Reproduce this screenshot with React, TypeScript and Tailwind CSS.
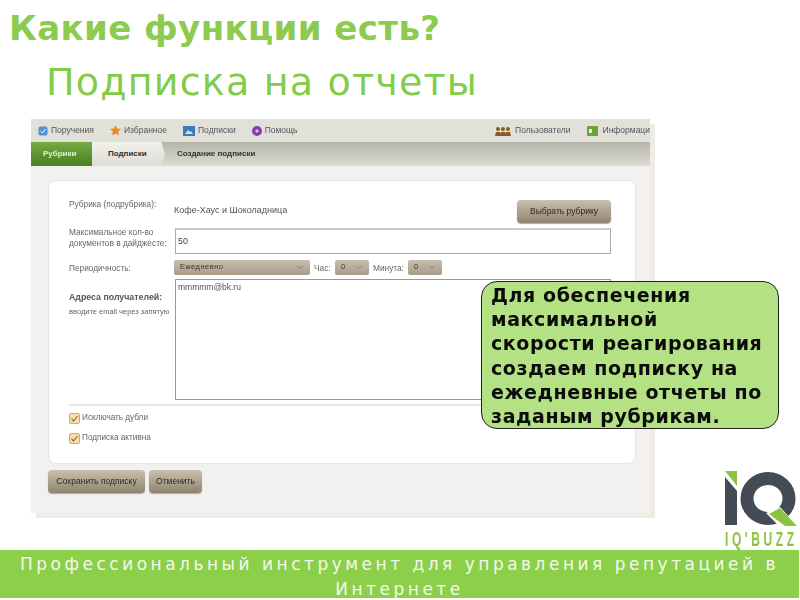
import React from "react";

const Btn = ({ children, className = "" }: { children: React.ReactNode; className?: string }) => (
  <div className={"flex items-center justify-center rounded-[4px] bg-gradient-to-b from-[#c9c0ae] to-[#8f8470] text-[#2e2a22] text-[8.5px] font-['Liberation_Sans',sans-serif] shadow-[0_1px_1px_#aaa] " + className}>
    {children}
  </div>
);

const Sel = ({ label, className = "" }: { label: string; className?: string }) => (
  <div className={"flex items-center justify-between h-[15px] rounded-[2px] bg-gradient-to-b from-[#c7beae] to-[#a89d89] px-[6px] text-[#3b3528] text-[7.5px] tracking-[0.5px] " + className}>
    <span>{label}</span>
    <svg width="8" height="5" viewBox="0 0 8 5"><path d="M1 1l3 2.5L7 1" fill="none" stroke="#8d8474" strokeWidth="1" /></svg>
  </div>
);

const Check = ({ label }: { label: string }) => (
  <div className="flex items-center gap-[2px] h-[12px]">
    <svg width="11" height="11" viewBox="0 0 11 11">
      <rect x="0.5" y="0.5" width="10" height="10" rx="1.5" fill="#f6dcae" stroke="#d9a860" />
      <path d="M2.5 5.5l2 2.5 4-5" fill="none" stroke="#9a6a28" strokeWidth="1.2" />
    </svg>
    <span className="text-[8.2px] text-[#666]">{label}</span>
  </div>
);

const Logo = () => (
  <div className="w-[80px] blur-[0.3px]">
    <svg width="80" height="64" viewBox="0 0 80 64" className="block">
      <path d="M5 6H17V21Z" fill="#8bc53f" />
      <path d="M5 12L17 26V60H5Z" fill="#434c54" />
      <ellipse cx="48" cy="33.5" rx="21" ry="20" fill="none" stroke="#434c54" strokeWidth="13" />
      <path d="M46 48L60 42L80 64H62Z" fill="#fff" />
      <path d="M49 49L60 43L77 61H65Z" fill="#8bc53f" />
    </svg>
    <div className="origin-left scale-x-[0.6] ml-[5px] font-['Liberation_Sans',sans-serif] font-bold text-[#8bc53f] text-[20px] leading-[20px] tracking-[6px] whitespace-nowrap">IQ'BUZZ</div>
  </div>
);

export default function App() {
  return (
    <div className="relative w-[800px] h-[600px] overflow-hidden bg-white font-['DejaVu_Sans',sans-serif]">
      <h1 className="pl-[9px] pt-[8px] h-[60px] text-[34px] leading-[40px] font-bold text-[#8ccb50] tracking-[0.4px] whitespace-nowrap">Какие функции есть?</h1>
      <h2 className="pl-[46px] h-[59px] text-[38px] leading-[44px] text-[#82cc4a] tracking-[1.2px] whitespace-nowrap">Подписка на отчеты</h2>

      <div className="ml-[31px] w-[619px] h-[394px] bg-[#f3f1ef] shadow-[5px_5px_0_#efece6] font-['Liberation_Sans',sans-serif] blur-[0.45px]">
        <div className="h-[23px] bg-[#e1e1d9] flex items-center justify-between pl-[7px] text-[8.5px] text-[#55555a]">
          <div className="flex items-center">
            <svg width="10" height="10" viewBox="0 0 10 10"><rect x="0.5" y="0.5" width="9" height="9" rx="2" fill="#4f94d4" /><path d="M2.5 5l2 2 3-4" stroke="#fff" fill="none" /></svg>
            <span className="ml-[3px]">Поручения</span>
            <svg className="ml-[16px]" width="11" height="11" viewBox="0 0 11 11"><path d="M5.5 0l1.6 3.6 3.9.4-2.9 2.6.8 3.9-3.4-2-3.4 2 .8-3.9L0 4l3.9-.4z" fill="#e88a1f" /></svg>
            <span className="ml-[3px]">Избранное</span>
            <svg className="ml-[16px]" width="12" height="10" viewBox="0 0 12 10"><rect width="12" height="10" fill="#3f79b8" /><path d="M2 8l3-4 2 2 1-1 2 3z" fill="#cfe4f7" /></svg>
            <span className="ml-[3px]">Подписки</span>
            <svg className="ml-[16px]" width="10" height="10" viewBox="0 0 10 10"><circle cx="5" cy="5" r="5" fill="#8a3fb0" /><circle cx="5" cy="5" r="1.6" fill="#e8c8f4" /></svg>
            <span className="ml-[3px]">Помощь</span>
          </div>
          <div className="flex items-center whitespace-nowrap">
            <svg width="16" height="10" viewBox="0 0 16 10"><g fill="#8a5a22"><circle cx="3" cy="3" r="2" /><circle cx="8" cy="3" r="2" /><circle cx="13" cy="3" r="2" /><path d="M0 10l1-4h4l1 4zM5 10l1-4h4l1 4zM10 10l1-4h4l1 4z" /></g></svg>
            <span className="ml-[4px] mr-[16px]">Пользователи</span>
            <svg width="11" height="10" viewBox="0 0 11 10"><rect width="11" height="10" fill="#6aa53a" /><rect x="2" y="3" width="3" height="4" fill="#e8f4d8" /></svg>
            <span className="ml-[5px]">Информаци</span>
          </div>
        </div>

        <div className="h-[24px] flex items-stretch bg-gradient-to-b from-[#b5b5a9] to-[#dcdcd4] text-[8px] font-bold">
          <div className="w-[61px] bg-gradient-to-b from-[#74ab42] to-[#4b7f24] text-[#e4f2d2] flex items-center pl-[12px]">Рубрики</div>
          <div className="w-[73px] bg-gradient-to-b from-[#f2f1ec] to-[#dedcd5] text-[#333] flex items-center pl-[16px] [clip-path:polygon(0_0,95%_0,100%_50%,95%_100%,0_100%)]">Подписки</div>
          <div className="flex items-center pl-[12px] text-[#333]">Создание подписки</div>
        </div>

        <div className="pl-[17px] pt-[14px]">
          <div className="w-[588px] h-[284px] bg-white rounded-[8px] border border-[#e6e6e6] pl-[20px] pt-[15px] text-[8.3px] text-[#666]">
            <div className="flex items-center h-[30px]">
              <span className="w-[105px] mb-[14px]">Рубрика (подрубрика):</span>
              <span className="text-[#555] text-[9px] flex-1">Кофе-Хаус и Шоколадница</span>
              <Btn className="w-[94px] h-[23px] mr-[24px]">Выбрать рубрику</Btn>
            </div>
            <div className="flex items-center h-[26px] mt-[2px]">
              <span className="w-[106px] leading-[11px] mb-[6px]">Максимальное кол-во документов в дайджесте:</span>
              <div className="w-[436px] h-[26px] border border-[#aaa] border-t-[2px] border-t-[#ccc] flex items-center pl-[2px] text-[9px] text-[#444]">50</div>
            </div>
            <div className="flex items-center h-[16px] mt-[5px]">
              <span className="w-[105px] pt-[2px]">Периодичность:</span>
              <Sel label="Ежедневно" className="w-[136px]" />
              <span className="ml-[4px] w-[21px] pt-[2px]">Час:</span>
              <Sel label="0" className="w-[34px]" />
              <span className="ml-[4px] w-[35px] pt-[2px]">Минута:</span>
              <Sel label="0" className="w-[34px]" />
            </div>
            <div className="flex h-[121px] mt-[4px]">
              <div className="w-[106px] pt-[12px]">
                <div className="font-bold text-[8.8px] text-[#555] whitespace-nowrap">Адреса получателей:</div>
                <div className="text-[7.5px] mt-[2px] whitespace-nowrap">вводите email через запятую</div>
              </div>
              <div className="w-[436px] border border-[#999] pl-[2px] text-[8.5px] text-[#5a4a62] pt-[1px]">mmmmm@bk.ru</div>
            </div>
            <div className="h-[2px] bg-[#e4e4e0] mt-[4px] w-[546px]" />
            <div className="mt-[6px] flex flex-col gap-[8px]">
              <Check label="Исключать дубли" />
              <Check label="Подписка активна" />
            </div>
          </div>
          <div className="flex gap-[4px] mt-[6px]">
            <Btn className="w-[97px] h-[23px]">Сохранить подписку</Btn>
            <Btn className="w-[53px] h-[23px]">Отменить</Btn>
          </div>
        </div>
      </div>

      <div className="absolute left-[481px] top-[281px] w-[298px] h-[148px] rounded-[16px] border border-[#222] bg-[#b3e183] pl-[9px] pt-[1px] text-[19px] leading-[24.2px] font-bold text-[#0c0c0c] tracking-[0.6px] whitespace-nowrap">
        Для обеспечения<br />максимальной<br />скорости реагирования<br />создаем подписку на<br />ежедневные отчеты по<br />заданым рубрикам.
      </div>

      <div className="absolute left-[720px] top-[465px]"><Logo /></div>

      <div className="absolute left-0 top-[550px] w-[799px] h-[48px] bg-[#8ccf4b] text-center text-[17px] leading-[25px] text-[#f4f9ec] tracking-[3.5px] pt-[2px]">
        Профессиональный инструмент для управления репутацией в Интернете
      </div>
    </div>
  );
}
